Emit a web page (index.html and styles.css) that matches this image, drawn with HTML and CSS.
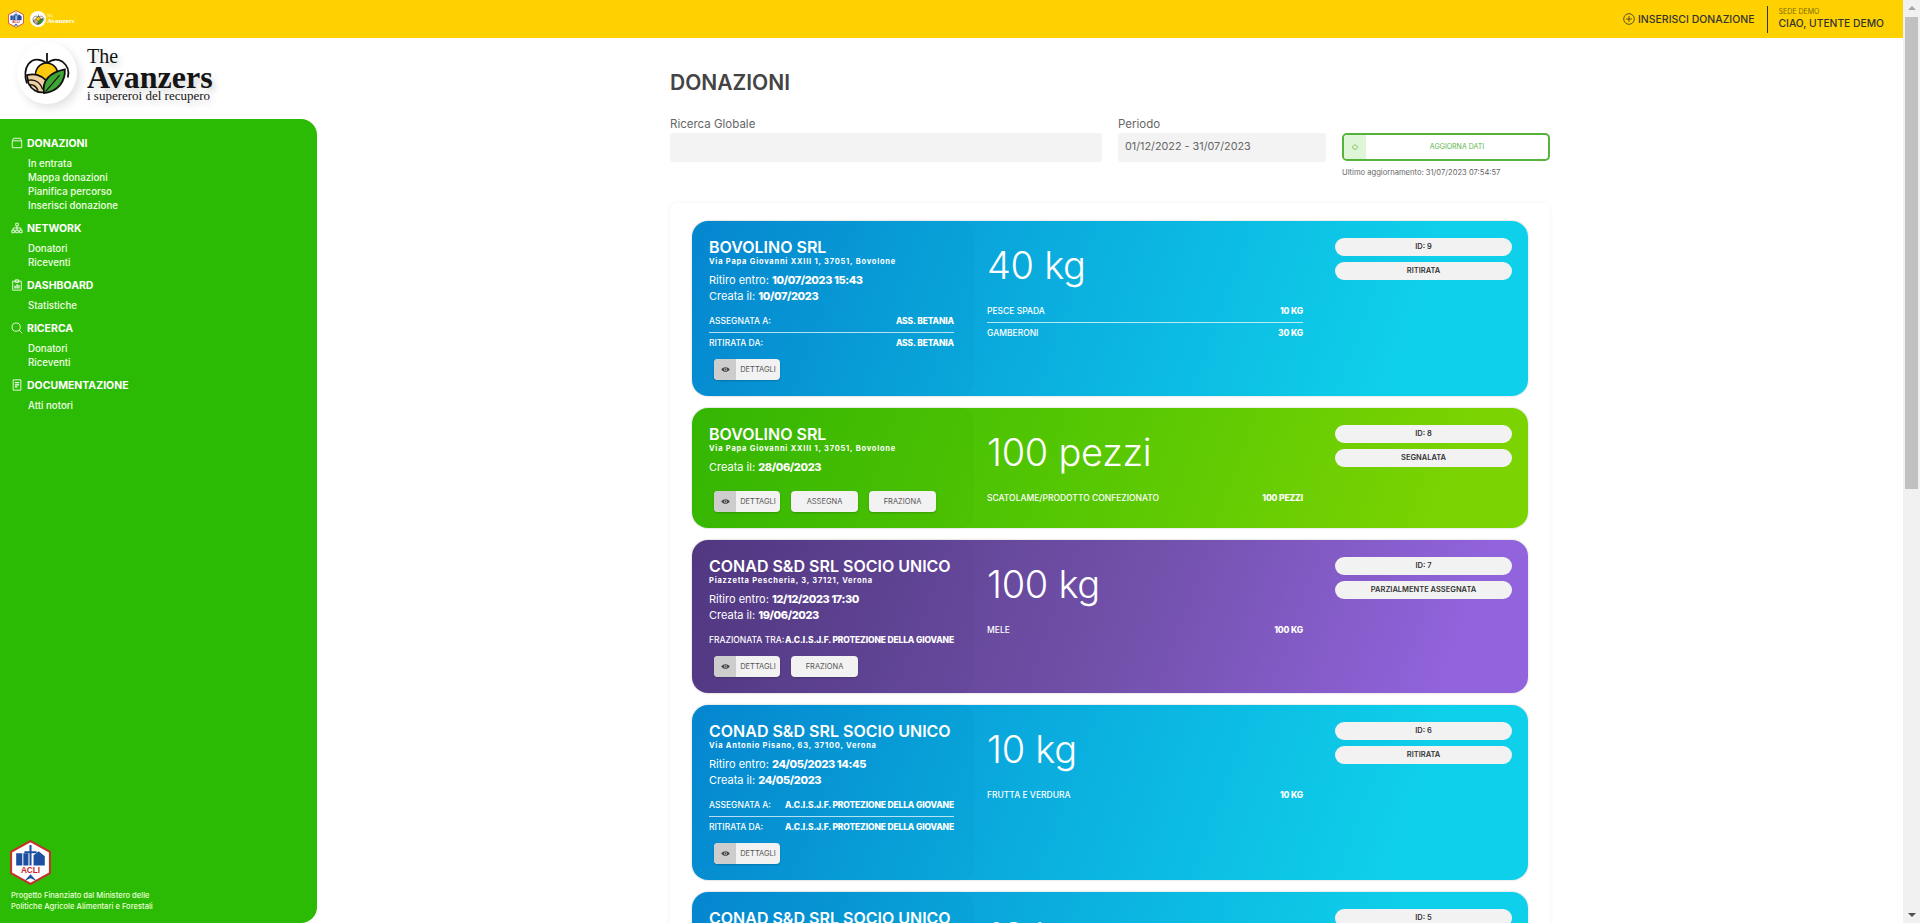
FILE: index.html
```html
<!DOCTYPE html>
<html>
<head>
<meta charset="utf-8">
<title>The Avanzers - Donazioni</title>
<link rel="stylesheet" href="styles.css">
</head>
<body>

<svg class="defs" width="0" height="0">
  <symbol id="apple" viewBox="0 0 70 70">
    <path d="M35 36 L35 8" fill="none" stroke="#111" stroke-width="2.4"/>
    <path d="M35 22 C42 16 50 16 56 20 C63 25 65 33 63 41" fill="none" stroke="#111" stroke-width="2.4"/>
    <path d="M35 22 C26 15 16 15 10 23 C5 30 5 40 8 49" fill="none" stroke="#111" stroke-width="2.4"/>
    <path d="M20 40 A14.500 14.500 0 0 1 49 33 L35 52 Z" fill="#ffc90e" stroke="#111" stroke-width="2"/>
    <path d="M8 38 C18 35 28 38 34 45 C36 49 35 55 31 61 C22 62 14 57 10 49 Z" fill="#f0cfa4" stroke="#111" stroke-width="2.4"/>
    <path d="M9 45 C18 43 26 47 29 57 M11 51 C17 50 21 54 23 59" fill="none" stroke="#111" stroke-width="1.800"/>
    <path d="M31 62 C28 46 38 34 59 30 C60 46 50 60 31 62 Z" fill="#3fa535" stroke="#111" stroke-width="2.400"/>
    <path d="M33 60 L52 38" fill="none" stroke="#111" stroke-width="1.500"/>
  </symbol>
  <symbol id="acli" viewBox="0 0 40 44">
    <path d="M20 1 L39 11.500 L39 32.500 L20 43 L1 32.500 L1 11.500 Z" fill="#fff" stroke="#c8302c" stroke-width="2"/>
    <path d="M6 13 H12 V25 H6 Z M13 13 H18 V25 H13 Z" fill="#1f4fa0"/>
    <path d="M19 5 H21 V11 H26 V13 H21 V25 H19 V13 H14 V11 H19 Z" fill="#1f4fa0"/>
    <path d="M23 25 V15 L28 11 L34 16 V25 Z" fill="#1f4fa0"/>
    <rect x="5" y="26" width="30" height="7" fill="#fff"/>
    <text x="20" y="32.500" class="acli-text" text-anchor="middle">ACLI</text>
    <path d="M14 40 L20 33.500 L26 40 L20 37.500 Z" fill="#1f4fa0"/>
  </symbol>
  <symbol id="eye" viewBox="0 0 16 16">
    <path d="M0.500 8 C4 2.500 12 2.500 15.500 8 C12 13.500 4 13.500 0.500 8 Z" fill="#444"/>
    <circle cx="8" cy="8" r="2.800" fill="#ccc"/>
    <circle cx="8" cy="8" r="1.600" fill="#444"/>
  </symbol>
</svg>

<div class="page">
  <div class="content">

    <header class="topbar">
      <div class="topbar-logos">
        <svg class="mini-acli"><use href="#acli"/></svg>
        <span class="mini-circle"><svg class="mini-apple"><use href="#apple"/></svg></span>
        <span class="mini-name"><small>The</small>Avanzers</span>
      </div>
      <a class="topbar-add">
        <svg class="add-icon" viewBox="0 0 12 12"><circle cx="6" cy="6" r="5.300"/><path d="M6 3 V9 M3 6 H9"/></svg>
        INSERISCI DONAZIONE
      </a>
      <div class="topbar-user">
        <span class="user-site">SEDE DEMO</span>
        <span class="user-name">CIAO, UTENTE DEMO</span>
      </div>
    </header>

    <div class="body-row">
      <aside class="side">
        <div class="brand">
          <span class="brand-circle"><svg class="brand-apple"><use href="#apple"/></svg></span>
          <div class="brand-text">
            <div class="brand-the">The</div>
            <div class="brand-name">Avanzers</div>
            <div class="brand-sub">i supereroi del recupero</div>
          </div>
        </div>

        <nav class="nav">
          <div class="nav-head">
            <svg class="nav-icon" viewBox="0 0 14 14"><path d="M1.500 4.500 L3 1.500 H11 L12.500 4.500 V12.500 H1.500 Z M1.500 4.500 H12.500"/></svg>
            DONAZIONI
          </div>
          <a class="nav-link">In entrata</a>
          <a class="nav-link">Mappa donazioni</a>
          <a class="nav-link">Pianifica percorso</a>
          <a class="nav-link">Inserisci donazione</a>

          <div class="nav-head">
            <svg class="nav-icon" viewBox="0 0 14 14"><path d="M5.500 1.500 H8.500 V4.500 H5.500 Z M1 9.500 H4 V12.500 H1 Z M5.500 9.500 H8.500 V12.500 H5.500 Z M10 9.500 H13 V12.500 H10 Z M7 4.500 V9.500 M2.500 9.500 V7 H11.500 V9.500"/></svg>
            NETWORK
          </div>
          <a class="nav-link">Donatori</a>
          <a class="nav-link">Riceventi</a>

          <div class="nav-head">
            <svg class="nav-icon" viewBox="0 0 14 14"><path d="M2 2.500 H12 V13 H2 Z M5 1 H9 V4 H5 Z"/><path class="fill" d="M4 8 H5.500 V11 H4 Z M6.300 6 H7.800 V11 H6.300 Z M8.600 7 H10 V11 H8.600 Z"/></svg>
            DASHBOARD
          </div>
          <a class="nav-link">Statistiche</a>

          <div class="nav-head">
            <svg class="nav-icon" viewBox="0 0 14 14"><circle cx="6" cy="6" r="4.800"/><path d="M9.500 9.500 L13.300 13.300"/></svg>
            RICERCA
          </div>
          <a class="nav-link">Donatori</a>
          <a class="nav-link">Riceventi</a>

          <div class="nav-head">
            <svg class="nav-icon" viewBox="0 0 14 14"><path d="M2.500 1 H11.500 V13 H2.500 Z"/><path class="fill" d="M4.500 3.500 H9.500 V5 H4.500 Z M4.500 6 H9.500 V7.500 H4.500 Z M4.500 8.500 H7.500 V10 H4.500 Z"/></svg>
            DOCUMENTAZIONE
          </div>
          <a class="nav-link">Atti notori</a>
        </nav>

        <div class="side-foot">
          <svg class="foot-logo"><use href="#acli"/></svg>
          <p>Progetto Finanziato dal Ministero delle<br>Politiche Agricole Alimentari e Forestali</p>
        </div>
      </aside>

      <main class="main">
        <h1 class="title">DONAZIONI</h1>

        <div class="filters">
          <div class="field">
            <label>Ricerca Globale</label>
            <div class="input"></div>
          </div>
          <div class="field">
            <label>Periodo</label>
            <div class="input">01/12/2022 - 31/07/2023</div>
          </div>
          <div class="field">
            <label>&nbsp;</label>
            <button class="refresh">
              <span class="refresh-icon"><svg viewBox="0 0 10 10"><path d="M5 1 V4 M3 2.800 A3 3 0 1 0 7 2.800"/></svg></span>
              <span class="refresh-label">AGGIORNA DATI</span>
            </button>
            <div class="last-update">Ultimo aggiornamento: 31/07/2023 07:54:57</div>
          </div>
        </div>

        <section class="cards">

          <article class="card card-blue">
            <div class="card-left">
              <h2>BOVOLINO SRL</h2>
              <div class="addr">Via Papa Giovanni XXIII 1, 37051, Bovolone</div>
              <div class="date">Ritiro entro: <b>10/07/2023 15:43</b></div>
              <div class="date">Creata il: <b>10/07/2023</b></div>
              <div class="rows">
                <div class="row"><span>ASSEGNATA A:</span><b>ASS. BETANIA</b></div>
                <div class="row"><span>RITIRATA DA:</span><b>ASS. BETANIA</b></div>
              </div>
              <div class="btns">
                <button class="btn btn-eye"><span class="eye"><svg><use href="#eye"/></svg></span><span class="btn-label">DETTAGLI</span></button>
              </div>
            </div>
            <div class="card-qty">
              <div class="big">40 kg</div>
              <div class="rows-qty">
                <div class="row"><span>PESCE SPADA</span><b>10 KG</b></div>
                <div class="row"><span>GAMBERONI</span><b>30 KG</b></div>
              </div>
            </div>
            <div class="card-tags">
              <div class="pill">ID: 9</div>
              <div class="pill">RITIRATA</div>
            </div>
          </article>

          <article class="card card-green">
            <div class="card-left">
              <h2>BOVOLINO SRL</h2>
              <div class="addr">Via Papa Giovanni XXIII 1, 37051, Bovolone</div>
              <div class="date">Creata il: <b>28/06/2023</b></div>
              <div class="btns btns-far">
                <button class="btn btn-eye"><span class="eye"><svg><use href="#eye"/></svg></span><span class="btn-label">DETTAGLI</span></button>
                <button class="btn">ASSEGNA</button>
                <button class="btn">FRAZIONA</button>
              </div>
            </div>
            <div class="card-qty">
              <div class="big">100 pezzi</div>
              <div class="rows-qty">
                <div class="row"><span>SCATOLAME/PRODOTTO CONFEZIONATO</span><b>100 PEZZI</b></div>
              </div>
            </div>
            <div class="card-tags">
              <div class="pill">ID: 8</div>
              <div class="pill">SEGNALATA</div>
            </div>
          </article>

          <article class="card card-purple">
            <div class="card-left">
              <h2>CONAD S&amp;D SRL SOCIO UNICO</h2>
              <div class="addr">Piazzetta Pescheria, 3, 37121, Verona</div>
              <div class="date">Ritiro entro: <b>12/12/2023 17:30</b></div>
              <div class="date">Creata il: <b>19/06/2023</b></div>
              <div class="rows">
                <div class="row"><span>FRAZIONATA TRA:</span><b>A.C.I.S.J.F. PROTEZIONE DELLA GIOVANE</b></div>
              </div>
              <div class="btns">
                <button class="btn btn-eye"><span class="eye"><svg><use href="#eye"/></svg></span><span class="btn-label">DETTAGLI</span></button>
                <button class="btn">FRAZIONA</button>
              </div>
            </div>
            <div class="card-qty">
              <div class="big">100 kg</div>
              <div class="rows-qty">
                <div class="row"><span>MELE</span><b>100 KG</b></div>
              </div>
            </div>
            <div class="card-tags">
              <div class="pill">ID: 7</div>
              <div class="pill">PARZIALMENTE ASSEGNATA</div>
            </div>
          </article>

          <article class="card card-blue">
            <div class="card-left">
              <h2>CONAD S&amp;D SRL SOCIO UNICO</h2>
              <div class="addr">Via Antonio Pisano, 63, 37100, Verona</div>
              <div class="date">Ritiro entro: <b>24/05/2023 14:45</b></div>
              <div class="date">Creata il: <b>24/05/2023</b></div>
              <div class="rows">
                <div class="row"><span>ASSEGNATA A:</span><b>A.C.I.S.J.F. PROTEZIONE DELLA GIOVANE</b></div>
                <div class="row"><span>RITIRATA DA:</span><b>A.C.I.S.J.F. PROTEZIONE DELLA GIOVANE</b></div>
              </div>
              <div class="btns">
                <button class="btn btn-eye"><span class="eye"><svg><use href="#eye"/></svg></span><span class="btn-label">DETTAGLI</span></button>
              </div>
            </div>
            <div class="card-qty">
              <div class="big">10 kg</div>
              <div class="rows-qty">
                <div class="row"><span>FRUTTA E VERDURA</span><b>10 KG</b></div>
              </div>
            </div>
            <div class="card-tags">
              <div class="pill">ID: 6</div>
              <div class="pill">RITIRATA</div>
            </div>
          </article>

          <article class="card card-blue">
            <div class="card-left">
              <h2>CONAD S&amp;D SRL SOCIO UNICO</h2>
            </div>
            <div class="card-qty">
              <div class="big">10 kg</div>
            </div>
            <div class="card-tags">
              <div class="pill">ID: 5</div>
            </div>
          </article>

        </section>
      </main>
    </div>
  </div>

  <div class="scrollbar">
    <span class="arrow-up"></span>
    <span class="thumb"></span>
    <span class="arrow-down"></span>
  </div>
</div>

</body>
</html>
```

FILE: styles.css
```css
*{
  box-sizing: border-box;
}
html, body{
  margin: 0;
  height: 100%;
  overflow: hidden;
}
body{
  font-family: 'Inter', 'Open Sans', sans-serif;
  background-color: #fff;
  color: #333;
}
.defs{
  position: absolute;
}
.acli-text{
  font-family: 'Liberation Sans', sans-serif;
  font-weight: 700;
  font-size: 8px;
  fill: #d3202a;
}

.page{
  display: flex;
  height: 923px;
  overflow: hidden;
}
.content{
  width: 1903px;
  display: flex;
  flex-direction: column;
}

/* scrollbar */
.scrollbar{
  width: 17px;
  background-color: #f1f1f1;
  display: flex;
  flex-direction: column;
  align-items: center;
  padding-top: 6px;
}
.arrow-up{
  border-left: 4px solid transparent;
  border-right: 4px solid transparent;
  border-bottom: 4px solid #a3a3a3;
}
.thumb{
  width: 13px;
  height: 472px;
  margin-top: 7px;
  background-color: #c1c1c1;
}
.arrow-down{
  margin-top: auto;
  margin-bottom: 6px;
  border-left: 4px solid transparent;
  border-right: 4px solid transparent;
  border-top: 4px solid #505050;
}

/* topbar */
.topbar{
  height: 38px;
  flex: none;
  background-color: #ffd100;
  display: flex;
  align-items: center;
  padding: 0 19px 0 8px;
}
.topbar-logos{
  display: flex;
  align-items: center;
  margin-right: auto;
}
.mini-acli{
  width: 16px;
  height: 18px;
}
.mini-circle{
  width: 16px;
  height: 16px;
  margin-left: 6px;
  border-radius: 50%;
  background-color: #fff;
  display: flex;
  align-items: center;
  justify-content: center;
}
.mini-apple{
  width: 13px;
  height: 13px;
}
.mini-name{
  margin-left: 1px;
  color: #fff;
  font-family: 'Liberation Serif', serif;
  font-size: 7px;
  font-weight: 700;
  line-height: 6px;
}
.mini-name small{
  display: block;
  font-size: 4px;
  font-weight: 400;
  line-height: 4px;
}
.topbar-add{
  display: flex;
  align-items: center;
  gap: 3px;
  font-size: 10.500px;
  font-weight: 500;
  color: #333;
  white-space: nowrap;
}
.add-icon{
  width: 12px;
  height: 12px;
  fill: none;
  stroke: #333;
  stroke-width: .8;
}
.topbar-user{
  margin-left: 12px;
  padding: 0 0 0 11px;
  height: 27px;
  border-left: 1.500px solid #333;
  display: flex;
  flex-direction: column;
  justify-content: center;
}
.user-site{
  font-size: 7px;
  color: #7c6c10;
  line-height: 9px;
}
.user-name{
  font-size: 10.300px;
  font-weight: 500;
  color: #333;
  line-height: 15px;
  white-space: nowrap;
}

.body-row{
  flex: 1;
  display: flex;
  min-height: 0;
}

/* sidebar */
.side{
  width: 317px;
  flex: none;
  display: flex;
  flex-direction: column;
}
.brand{
  height: 81px;
  flex: none;
  display: flex;
  padding: 4px 0 0 17px;
}
.brand-circle{
  width: 60px;
  height: 62px;
  flex: none;
  border-radius: 50%;
  background-color: #fff;
  box-shadow: 3px 4px 10px rgba(0,0,0,.12);
  display: flex;
  align-items: center;
  justify-content: center;
}
.brand-apple{
  width: 52px;
  height: 52px;
}
.brand-text{
  margin-left: 10px;
  padding-top: 5px;
  font-family: 'Liberation Serif', serif;
  color: #151515;
  text-shadow: 3px 4px 6px rgba(0,0,0,.18);
}
.brand-the{
  font-size: 20px;
  line-height: 18px;
}
.brand-name{
  font-size: 32px;
  font-weight: 700;
  line-height: 24px;
}
.brand-sub{
  font-size: 13px;
  line-height: 14px;
  white-space: nowrap;
}

.nav{
  flex: 1;
  background-color: #2bbb04;
  border-top-right-radius: 16px;
  padding: 16px 0 0 11px;
  color: #fff;
}
.nav-head{
  display: flex;
  align-items: center;
  gap: 4px;
  height: 16px;
  margin-top: 7px;
  margin-bottom: 6px;
  font-size: 10.500px;
  font-weight: 700;
}
.nav-head:first-child{
  margin-top: 0;
}
.nav-icon{
  width: 12px;
  height: 12px;
  flex: none;
  fill: none;
  stroke: #fff;
  stroke-width: 1;
}
.nav-icon .fill{
  fill: #fff;
  stroke: none;
}
.nav-link{
  display: block;
  height: 14px;
  line-height: 14px;
  margin-left: 17px;
  font-size: 9.700px;
  font-weight: 500;
  color: #f0ffe6;
}
.side-foot{
  background-color: #2bbb04;
  border-bottom-right-radius: 16px;
  padding: 0 0 11px 10px;
  color: #eaffd8;
}
.foot-logo{
  display: block;
  width: 41px;
  height: 45px;
}
.side-foot p{
  margin: 5px 0 0 1px;
  font-size: 7.600px;
  font-weight: 500;
  line-height: 11px;
  white-space: nowrap;
}

/* main */
.main{
  flex: 1;
  min-width: 0;
  padding: 0 0 0 353px;
}
.title{
  margin: 0;
  padding-top: 30px;
  font-size: 21px;
  line-height: 30px;
  font-weight: 600;
  color: #444;
}
.filters{
  display: grid;
  grid-template-columns: 432px 208px 208px;
  column-gap: 16px;
  width: 880px;
  margin-top: 19px;
  height: 86px;
}
.field label{
  display: block;
  font-size: 11.500px;
  line-height: 14px;
  margin-bottom: 2px;
  color: #666;
}
.input{
  height: 29px;
  padding: 0 7px;
  line-height: 28px;
  font-size: 10.800px;
  color: #666;
  background-color: #f3f3f3;
  border-radius: 3px;
}
.refresh{
  width: 100%;
  height: 28px;
  padding: 0;
  display: flex;
  background-color: #fff;
  border: 2px solid #55b23a;
  border-radius: 5px;
  overflow: hidden;
  font-family: inherit;
}
.refresh-icon{
  width: 22px;
  height: 100%;
  background-color: #dff5d8;
  display: flex;
  align-items: center;
  justify-content: center;
}
.refresh-icon svg{
  width: 8px;
  height: 8px;
  fill: none;
  stroke: #6cbb55;
  stroke-width: 1;
}
.refresh-label{
  flex: 1;
  line-height: 24px;
  text-align: center;
  font-size: 7px;
  color: #5cb548;
}
.last-update{
  margin-top: 7px;
  font-size: 7.600px;
  line-height: 10px;
  color: #666;
  white-space: nowrap;
}

/* cards */
.cards{
  width: 880px;
  padding: 17.500px 22px 0;
  background-color: #fff;
  border-radius: 8px;
  box-shadow: 0 0 5px rgba(0,0,0,.05);
}
.card{
  display: flex;
  margin-bottom: 12px;
  border-radius: 16px;
  color: #fff;
  box-shadow: 0 0 2px rgba(0,0,0,.25);
}
.card-blue{
  background: linear-gradient(110deg, #0688d2 0%, #0bb4e0 50%, #0fd0ea 85%);
}
.card-green{
  background: linear-gradient(110deg, #34b904 0%, #58c803 50%, #7bd302 90%);
}
.card-purple{
  background: linear-gradient(110deg, #523882 0%, #7050a8 50%, #9163dc 90%);
}
.card-left{
  width: 279px;
  flex: none;
  padding: 16px 17px 16px;
  border-radius: 16px;
  background-color: rgba(0,0,0,.012);
  box-shadow: 1px 0 3px rgba(0,0,0,.05);
}
.card-left h2{
  margin: 0;
  font-size: 16px;
  line-height: 20px;
  font-weight: 600;
  white-space: nowrap;
}
.addr{
  font-size: 7.500px;
  line-height: 10px;
  font-weight: 700;
  letter-spacing: .77px;
  white-space: nowrap;
}
.addr + .date{
  margin-top: 5px;
}
.date{
  font-size: 11px;
  line-height: 16px;
  white-space: nowrap;
}
.date b{
  font-weight: 800;
  letter-spacing: -.4px;
}
.rows{
  margin-top: 6px;
}
.row{
  height: 22px;
  display: flex;
  align-items: center;
  justify-content: space-between;
  font-size: 8.500px;
  font-weight: 500;
  white-space: nowrap;
}
.row b{
  font-weight: 800;
  letter-spacing: -.15px;
}
.row + .row{
  border-top: 1px solid rgba(255,255,255,.7);
}
.btns{
  display: flex;
  gap: 11px;
  margin-top: 5px;
  padding-left: 5px;
}
.btns-far{
  margin-top: 16px;
}
.btn{
  width: 67px;
  height: 21px;
  padding: 0;
  border: none;
  border-radius: 4px;
  background-color: #f2f2f2;
  font-family: inherit;
  font-size: 7.500px;
  color: #555;
  box-shadow: 0 1px 2px rgba(0,0,0,.2);
  overflow: hidden;
}
.btn-eye{
  display: flex;
  align-items: center;
  width: 66px;
}
.eye{
  width: 22px;
  height: 100%;
  background-color: #cdcdcd;
  display: flex;
  align-items: center;
  justify-content: center;
}
.eye svg{
  width: 9px;
  height: 9px;
}
.btn-label{
  flex: 1;
  text-align: center;
}
.card-qty{
  width: 316px;
  flex: none;
  margin-left: 16px;
  padding-top: 22px;
}
.big{
  height: 44px;
  line-height: 44px;
  font-size: 38px;
  font-weight: 300;
  letter-spacing: -.3px;
  white-space: nowrap;
}
.rows-qty{
  margin-top: 13px;
}
.card-tags{
  width: 177px;
  margin-left: 32px;
  padding-top: 17px;
}
.pill{
  height: 18px;
  margin-bottom: 6px;
  line-height: 18px;
  border-radius: 9px;
  background-color: #f2f2f2;
  text-align: center;
  font-size: 7.500px;
  font-weight: 600;
  color: #333;
}
```
